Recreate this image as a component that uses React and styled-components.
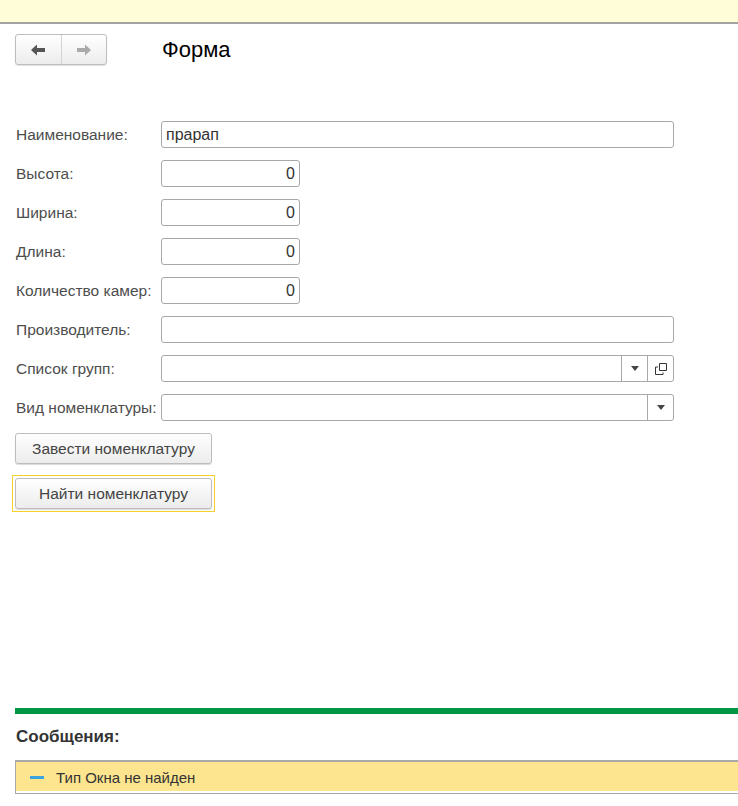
import React from "react";
import styled, { createGlobalStyle } from "styled-components";

const GlobalStyle = createGlobalStyle`
  html, body {
    margin: 0;
    padding: 0;
    background: #fff;
  }
  body {
    font-family: "Liberation Sans", Arial, sans-serif;
    color: #333;
  }
  * {
    box-sizing: border-box;
  }
`;

const Page = styled.div`
  display: flex;
  flex-direction: column;
  height: 806px;
  overflow: hidden;
`;

const TopBar = styled.div`
  height: 24px;
  flex-shrink: 0;
  background: #fffed8;
  border-bottom: 2px solid #a3a3a3;
`;

const Header = styled.div`
  display: flex;
  align-items: center;
  padding: 10px 0 0 15px;
`;

const NavGroup = styled.div`
  display: flex;
  width: 92px;
  height: 31px;
  border: 1px solid #bdbdbd;
  border-radius: 3px;
  background: linear-gradient(#ffffff, #ececec);
  box-shadow: 0 1px 1px rgba(0, 0, 0, 0.12);
`;

const NavButton = styled.div`
  flex: 1;
  display: flex;
  align-items: center;
  justify-content: center;
  & + & {
    border-left: 1px solid #d4d4d4;
  }
`;

const Title = styled.h1`
  margin: 0 0 0 55px;
  font-size: 22px;
  font-weight: normal;
  color: #000;
`;

const Content = styled.div`
  flex: 1;
  padding: 56px 0 0 15px;
`;

const Row = styled.div`
  display: grid;
  grid-template-columns: 146px auto;
  align-items: center;
  height: 27px;
  margin-bottom: 12px;
`;

const Label = styled.label`
  font-size: 15.5px;
  color: #4d4d4d;
  padding-left: 1px;
  white-space: nowrap;
`;

const Field = styled.div`
  display: flex;
  width: ${p => p.$width}px;
  height: 27px;
  border: 1px solid #a8a8a8;
  border-radius: 3px;
  background: #fff;
  overflow: hidden;
`;

const FieldValue = styled.div`
  flex: 1;
  display: flex;
  align-items: center;
  justify-content: ${p => (p.$right ? "flex-end" : "flex-start")};
  padding: 0 4px;
  font-size: 16px;
  color: #333;
`;

const FieldButton = styled.div`
  width: 26px;
  display: flex;
  align-items: center;
  justify-content: center;
  border-left: 1px solid #a8a8a8;
`;

const ActionButton = styled.div`
  display: flex;
  align-items: center;
  justify-content: center;
  width: 197px;
  height: 31px;
  border: 1px solid #bdbdbd;
  border-radius: 3px;
  background: linear-gradient(#ffffff, #ececec);
  box-shadow: 0 1px 1px rgba(0, 0, 0, 0.15);
  font-size: 15.5px;
  color: #444;
`;

const FocusFrame = styled.div`
  display: inline-block;
  margin: 11px 0 0 -3px;
  padding: 2px;
  border: 1px solid #f5cf2a;
`;

const Messages = styled.div`
  padding-left: 15px;
  padding-bottom: 12px;
`;

const GreenLine = styled.div`
  height: 6px;
  background: #009644;
`;

const MessagesTitle = styled.div`
  font-size: 17px;
  font-weight: bold;
  color: #333;
  padding: 13px 0 13px 1px;
`;

const MessageBox = styled.div`
  display: flex;
  align-items: center;
  height: 34px;
  background: #fde58f;
  border: 1px solid #a8a8a8;
  border-top-width: 2px;
  border-right: none;
  box-shadow: inset 0 -2px 0 #fff;
  padding-left: 14px;
  font-size: 15px;
  color: #333;
`;

const Dash = styled.span`
  display: inline-block;
  width: 14px;
  height: 3px;
  background: #3ba4dc;
  margin-right: 12px;
`;

function Arrow({ dir, color }) {
  return (
    <svg width="16" height="12" viewBox="0 0 16 12">
      <path
        d={dir === "left" ? "M1 6 L7 0.5 L7 4 L15 4 L15 8 L7 8 L7 11.5 Z" : "M15 6 L9 0.5 L9 4 L1 4 L1 8 L9 8 L9 11.5 Z"}
        fill={color}
      />
    </svg>
  );
}

function DropIcon() {
  return (
    <svg width="8" height="5" viewBox="0 0 8 5">
      <path d="M0 0 L8 0 L4 5 Z" fill="#444" />
    </svg>
  );
}

function OpenIcon() {
  return (
    <svg width="12" height="12" viewBox="0 0 12 12">
      <path d="M4.5 0.5 H11.5 V7.5 H4.5 Z" fill="none" stroke="#333" strokeWidth="1" />
      <path d="M0.5 4 V11.5 H8 V9.5" fill="none" stroke="#333" strokeWidth="1" />
      <path d="M0.5 4 H3" fill="none" stroke="#333" strokeWidth="1" />
    </svg>
  );
}

const fields = [
  { label: "Наименование:", value: "прарап", width: 513 },
  { label: "Высота:", value: "0", width: 139, right: true },
  { label: "Ширина:", value: "0", width: 139, right: true },
  { label: "Длина:", value: "0", width: 139, right: true },
  { label: "Количество камер:", value: "0", width: 139, right: true },
  { label: "Производитель:", value: "", width: 513 },
  { label: "Список групп:", value: "", width: 513, drop: true, open: true },
  { label: "Вид номенклатуры:", value: "", width: 513, drop: true }
];

export default function App() {
  return (
    <>
      <GlobalStyle />
      <Page>
        <TopBar />
        <Header>
          <NavGroup>
            <NavButton>
              <Arrow dir="left" color="#555" />
            </NavButton>
            <NavButton>
              <Arrow dir="right" color="#aaa" />
            </NavButton>
          </NavGroup>
          <Title>Форма</Title>
        </Header>
        <Content>
          {fields.map(f => (
            <Row key={f.label}>
              <Label>{f.label}</Label>
              <Field $width={f.width}>
                <FieldValue $right={f.right}>{f.value}</FieldValue>
                {f.drop && (
                  <FieldButton>
                    <DropIcon />
                  </FieldButton>
                )}
                {f.open && (
                  <FieldButton>
                    <OpenIcon />
                  </FieldButton>
                )}
              </Field>
            </Row>
          ))}
          <ActionButton>Завести номенклатуру</ActionButton>
          <FocusFrame>
            <ActionButton>Найти номенклатуру</ActionButton>
          </FocusFrame>
        </Content>
        <Messages>
          <GreenLine />
          <MessagesTitle>Сообщения:</MessagesTitle>
          <MessageBox>
            <Dash />
            Тип Окна не найден
          </MessageBox>
        </Messages>
      </Page>
    </>
  );
}
